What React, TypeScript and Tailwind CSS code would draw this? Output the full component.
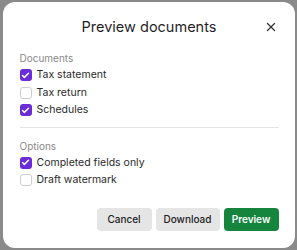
import { X, Check } from "lucide-react";

type Item = { label: string; checked: boolean };

const documents: Item[] = [
  { label: "Tax statement", checked: true },
  { label: "Tax return", checked: false },
  { label: "Schedules", checked: true },
];

const options: Item[] = [
  { label: "Completed fields only", checked: true },
  { label: "Draft watermark", checked: false },
];

function Row({ item }: { item: Item }) {
  return (
    <label className="flex items-center gap-[5px] h-[17.5px] text-[10.5px] text-[#2a2a2a]">
      {item.checked ? (
        <span className="w-[12px] h-[12px] rounded-[3px] bg-[#6c2bd9] flex items-center justify-center">
          <Check className="w-[9px] h-[9px] text-white" strokeWidth={4} />
        </span>
      ) : (
        <span className="w-[12px] h-[12px] rounded-[3px] border border-[#cfcfcf] bg-white" />
      )}
      {item.label}
    </label>
  );
}

function Section({ title, items }: { title: string; items: Item[] }) {
  return (
    <>
      <div className="h-[14px] leading-[14px] text-[10px] text-[#8a8a8a]">{title}</div>
      <div className="mt-[1.5px] flex flex-col">
        {items.map((d) => (
          <Row key={d.label} item={d} />
        ))}
      </div>
    </>
  );
}

export default function App() {
  return (
    <div
      className="w-[297px] h-[250px] bg-[#8a8a8a] flex items-center justify-center"
      style={{ fontFamily: "Inter, 'Liberation Sans', sans-serif" }}
    >
      <div className="w-[292px] h-[246px] bg-white rounded-[12px] pl-[17px] pr-[16px] pt-[15px] flex flex-col">
        <div className="relative flex items-center justify-center h-[20px]">
          <h1 className="text-[14.5px] font-normal text-[#1f1f1f]">Preview documents</h1>
          <button className="absolute right-[1px] top-[3px] text-[#333]">
            <X className="w-[14px] h-[14px]" strokeWidth={2.2} />
          </button>
        </div>

        <div className="mt-[14px]">
          <Section title="Documents" items={documents} />
        </div>

        <div className="mt-[7.5px] h-px bg-[#e4e4e4]" />

        <div className="mt-[11px]">
          <Section title="Options" items={options} />
        </div>

        <div className="mt-[19px] flex justify-end gap-[4px]">
          <button className="h-[23px] w-[55px] rounded-[4px] bg-[#e5e5e5] text-[10px] font-medium text-[#222]">
            Cancel
          </button>
          <button className="h-[23px] w-[64px] rounded-[4px] bg-[#e5e5e5] text-[10px] font-medium text-[#222]">
            Download
          </button>
          <button className="h-[23px] w-[55px] rounded-[4px] bg-[#15843d] text-[10px] font-semibold text-white">
            Preview
          </button>
        </div>
      </div>
    </div>
  );
}
